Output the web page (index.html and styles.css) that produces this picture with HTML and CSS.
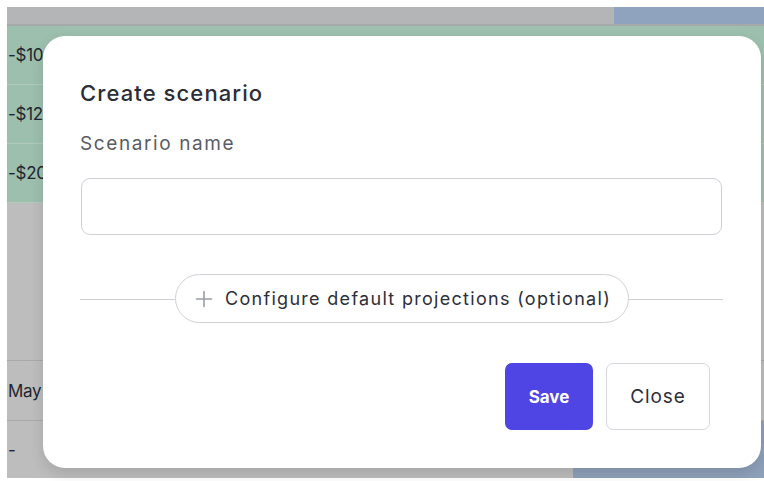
FILE: index.html
```html
<!DOCTYPE html>
<html lang="en">
<head>
<meta charset="utf-8">
<title>Create scenario</title>
<link rel="stylesheet" href="styles.css">
</head>
<body>
<div class="page">
  <div class="sheet">
    <div class="head-row">
      <div class="head-cell"></div>
      <div class="head-cell head-cell--accent"></div>
    </div>
    <div class="row row--green"><span class="amount">-$10</span></div>
    <div class="row row--green"><span class="amount">-$12</span></div>
    <div class="row row--green"><span class="amount">-$20</span></div>
    <div class="gap-block"></div>
    <div class="row row--gray"><span class="amount">May</span></div>
    <div class="row row--gray row--last">
      <span class="amount">-</span>
      <div class="tail-cell"></div>
    </div>
  </div>

  <div class="modal" role="dialog" aria-labelledby="modal-title">
    <h2 class="modal-title" id="modal-title">Create scenario</h2>
    <label class="field-label" for="scenario-name">Scenario name</label>
    <input class="text-input" id="scenario-name" type="text">

    <div class="divider">
      <button class="pill-btn" type="button">
        <svg class="plus" viewBox="0 0 18 18" width="18" height="18" aria-hidden="true">
          <path d="M9 1.5v15M1.5 9h15" stroke="#9a9ca6" stroke-width="1.6" stroke-linecap="round" fill="none"/>
        </svg>
        <span>Configure default projections (optional)</span>
      </button>
    </div>

    <div class="actions">
      <button class="btn btn--primary" type="button">Save</button>
      <button class="btn btn--ghost" type="button">Close</button>
    </div>
  </div>
</div>
</body>
</html>
```

FILE: styles.css
```css
* { box-sizing: border-box; }

html, body {
  margin: 0;
  background: #ffffff;
}

body {
  font-family: "Inter", "Open Sans", sans-serif;
  color: #2d2f3a;
}

.page {
  position: relative;
  width: 764px;
  height: 481px;
  padding: 7px 0 3px 7px;
  overflow: hidden;
}

/* dimmed spreadsheet behind the dialog */
.sheet {
  display: flex;
  flex-direction: column;
  height: 100%;
  background: #bdbdbd;
}

.head-row {
  display: flex;
  height: 19px;
  border-bottom: 2px solid #a6a8a9;
}

.head-cell {
  width: 607px;
  background: #b4b5b7;
}

.head-cell--accent {
  flex: 1;
  background: #8fa3bf;
}

.row {
  display: flex;
  align-items: center;
  border-bottom: 1px solid #b3c8bc;
}

.row--green {
  height: 59px;
  background: #9dbfae;
  border-bottom-color: #b1cabd;
}

.row--green:first-of-type { height: 57px; }

.row--gray {
  height: 60px;
  border-bottom-color: #a9a9a9;
}

.row--last {
  flex: 1;
  border-bottom: none;
  position: relative;
}

.gap-block {
  height: 158px;
  border-bottom: 1px solid #a9a9a9;
}

.amount {
  padding-left: 1px;
  font-family: "Inter", sans-serif;
  font-size: 17px;
  color: #1e2530;
  letter-spacing: -0.3px;
}

.tail-cell {
  position: absolute;
  right: 0;
  top: 0;
  bottom: 0;
  width: 191px;
  background: #8ea1bb;
}

/* dialog */
.modal {
  position: absolute;
  left: 43px;
  top: 36px;
  width: 718px;
  height: 432px;
  background: #ffffff;
  border-radius: 22px;
  box-shadow: 0 6px 14px rgba(0, 0, 0, 0.12);
  padding: 38px 39px 0 37px;
  display: flex;
  flex-direction: column;
}

.modal-title {
  margin: 0;
  font-size: 22px;
  font-weight: 500;
  line-height: 38px;
  color: #2b2d38;
  letter-spacing: 1.1px;
}

.field-label {
  margin-top: 22px;
  font-size: 19px;
  line-height: 20px;
  color: #5a5c64;
  letter-spacing: 1.6px;
}

.text-input {
  margin-top: 24px;
  margin-left: 1px;
  height: 57px;
  border: 1px solid #cfd1d6;
  border-radius: 9px;
  background: #ffffff;
  font: inherit;
  outline: none;
}

.divider {
  position: relative;
  display: flex;
  justify-content: center;
  margin-top: 39px;
  padding-left: 2px;
}

.divider::before {
  content: "";
  position: absolute;
  left: 0;
  right: -1px;
  top: 50%;
  border-top: 1px solid #cfd1d6;
}

.pill-btn {
  position: relative;
  display: flex;
  align-items: center;
  gap: 12px;
  height: 49px;
  padding: 0 17px 0 19px;
  border: 1px solid #cfd1d6;
  border-radius: 25px;
  background: #ffffff;
  font-family: "Inter", sans-serif;
  font-size: 18px;
  letter-spacing: 1.3px;
  color: #2d2f3a;
  cursor: pointer;
}

.actions {
  display: flex;
  justify-content: flex-end;
  gap: 13px;
  margin-top: 40px;
  padding-right: 12px;
}

.btn {
  height: 67px;
  border-radius: 7px;
  font-family: "Inter", sans-serif;
  cursor: pointer;
}

.btn--primary {
  width: 88px;
  border: none;
  background: #4f45e4;
  color: #ffffff;
  font-size: 17px;
  font-weight: 700;
  letter-spacing: 0;
}

.btn--ghost {
  width: 104px;
  border: 1px solid #d6d8dd;
  background: #ffffff;
  color: #2d2f3a;
  font-size: 19px;
  letter-spacing: 0.9px;
}
```
